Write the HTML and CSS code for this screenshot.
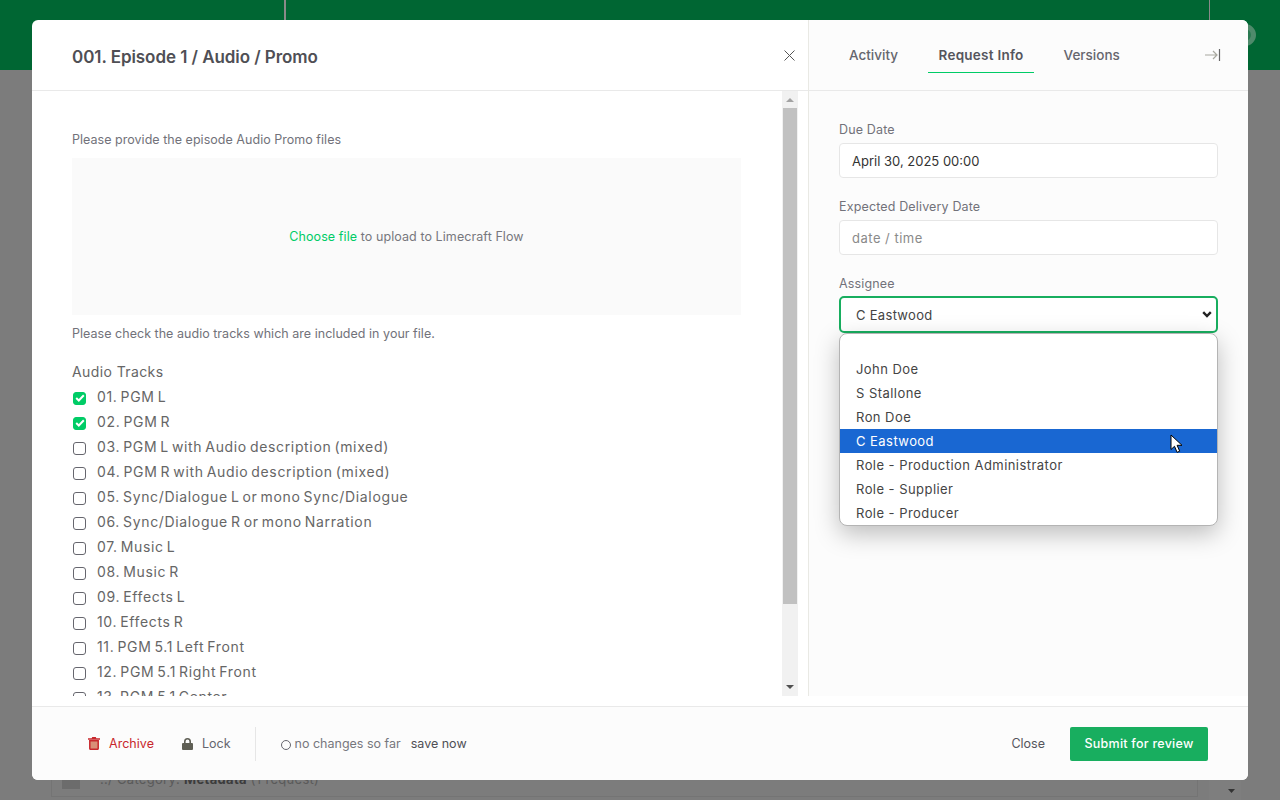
FILE: index.html
```html
<!DOCTYPE html>
<html lang="en">
<head>
<meta charset="utf-8">
<title>Request</title>
<link rel="stylesheet" href="styles.css">
</head>
<body>
<div class="backdrop">
  <header class="topbar">
    <span class="bar-divider bar-divider-left"></span>
    <span class="bar-divider bar-divider-right"></span>
    <span class="bar-avatar"></span>
  </header>
  <div class="page-behind">
    <div class="behind-row">
      <span class="behind-thumb"></span>
      <span class="behind-text">../ Category: <b>Metadata</b> (1 request)</span>
    </div>
    <div class="behind-side"></div>
    <svg class="behind-caret" width="7" height="4" viewBox="0 0 7 4"><path d="M0 0h7L3.500 4z"/></svg>
  </div>
</div>

<main class="modal">
  <div class="modal-body">
    <section class="main-pane">
      <div class="main-head">
        <h1 class="title">001. Episode 1 / Audio / Promo</h1>
        <svg class="close-icon" width="11" height="11" viewBox="0 0 11 11"><path d="M.5.5l10 10M10.500.5l-10 10"/></svg>
      </div>
      <div class="main-scroll">
        <div class="scroll-content">
          <p class="hint hint-top">Please provide the episode Audio Promo files</p>
          <div class="dropzone"><span><a class="choose">Choose file</a> to upload to Limecraft Flow</span></div>
          <p class="hint hint-check">Please check the audio tracks which are included in your file.</p>
          <h2 class="tracks-title">Audio Tracks</h2>
          <ul class="tracks">
            <li class="track"><span class="box checked"><svg width="10" height="8" viewBox="0 0 10 8"><path d="M1.200 4l2.600 2.500L8.800 1.300"/></svg></span>01. PGM L</li>
            <li class="track"><span class="box checked"><svg width="10" height="8" viewBox="0 0 10 8"><path d="M1.200 4l2.600 2.500L8.800 1.300"/></svg></span>02. PGM R</li>
            <li class="track"><span class="box"></span>03. PGM L with Audio description (mixed)</li>
            <li class="track"><span class="box"></span>04. PGM R with Audio description (mixed)</li>
            <li class="track"><span class="box"></span>05. Sync/Dialogue L or mono Sync/Dialogue</li>
            <li class="track"><span class="box"></span>06. Sync/Dialogue R or mono Narration</li>
            <li class="track"><span class="box"></span>07. Music L</li>
            <li class="track"><span class="box"></span>08. Music R</li>
            <li class="track"><span class="box"></span>09. Effects L</li>
            <li class="track"><span class="box"></span>10. Effects R</li>
            <li class="track"><span class="box"></span>11. PGM 5.1 Left Front</li>
            <li class="track"><span class="box"></span>12. PGM 5.1 Right Front</li>
            <li class="track"><span class="box"></span>13. PGM 5.1 Center</li>
          </ul>
        </div>
        <div class="scrollbar">
          <svg class="sb-arrow sb-up" width="8" height="4" viewBox="0 0 8 4"><path d="M0 4h8L4 0z"/></svg>
          <div class="sb-thumb"></div>
          <svg class="sb-arrow sb-down" width="8" height="4" viewBox="0 0 8 4"><path d="M0 0h8L4 4z"/></svg>
        </div>
      </div>
    </section>
    <aside class="side-pane">
      <div class="tabs">
        <span class="tab">Activity</span>
        <span class="tab tab-active">Request Info</span>
        <span class="tab">Versions</span>
        <svg class="collapse" width="16" height="12" viewBox="0 0 16 12"><path class="collapse-arrow" d="M0 6h12M8 2l4 4-4 4"/><path class="collapse-bar" d="M14.500 0v12"/></svg>
      </div>
      <div class="form">
        <label class="field-label">Due Date</label>
        <div class="input">April 30, 2025 00:00</div>
        <label class="field-label">Expected Delivery Date</label>
        <div class="input placeholder">date / time</div>
        <label class="field-label">Assignee</label>
        <div class="select">C Eastwood
          <svg class="chev" width="10" height="7" viewBox="0 0 10 7"><path d="M1.200 1.200L5 5l3.800-3.800"/></svg>
        </div>
      </div>
      <ul class="menu">
        <li class="opt opt-empty"></li>
        <li class="opt">John Doe</li>
        <li class="opt">S Stallone</li>
        <li class="opt">Ron Doe</li>
        <li class="opt opt-selected">C Eastwood</li>
        <li class="opt">Role - Production Administrator</li>
        <li class="opt">Role - Supplier</li>
        <li class="opt">Role - Producer</li>
      </ul>
      <svg class="cursor" width="13" height="20" viewBox="0 0 13 20"><path d="M1 1v14.500l3.500-3.200 2.600 6 2.600-1.100-2.600-5.900h4.900z"/></svg>
    </aside>
  </div>
  <footer class="footer">
    <div class="foot-left">
      <span class="foot-action foot-archive">
        <svg width="12" height="13" viewBox="0 0 12 13"><path class="trash-lid" d="M4.200 0h3.600l.5 1.200H12v1.600H0V1.200h3.700z"/><path class="trash-body" d="M1.800 3.800h8.400v7.700a.8.8 0 0 1-.8.800H2.600a.8.8 0 0 1-.8-.8z"/></svg>
        Archive
      </span>
      <span class="foot-action foot-lock">
        <svg width="11" height="12" viewBox="0 0 11 12"><path d="M2 5V3.500a3.500 3.500 0 0 1 7 0V5h1a1 1 0 0 1 1 1v5a1 1 0 0 1-1 1H1a1 1 0 0 1-1-1V6a1 1 0 0 1 1-1zm1.600 0h3.800V3.500a1.900 1.900 0 0 0-3.800 0z"/></svg>
        Lock
      </span>
      <span class="foot-sep"></span>
      <span class="status"><span class="status-dot"></span>no changes so far</span>
      <span class="save">save now</span>
    </div>
    <div class="foot-right">
      <span class="close-link">Close</span>
      <span class="submit">Submit for review</span>
    </div>
  </footer>
</main>
</body>
</html>
```
FILE: styles.css
```css
* { box-sizing: border-box; }
html, body { margin: 0; height: 100%; overflow: hidden; }
body { width: 1280px; height: 800px; position: relative; background: #7c7c7c; font-family: "Inter", "Liberation Sans", sans-serif; color: #666; font-size: 13px; }
.backdrop { height: 800px; display: flex; flex-direction: column; }
.topbar { height: 70px; background: #006633; position: relative; flex: none; }
.bar-divider { position: absolute; top: 0; width: 1px; height: 20px; background: #8a8a8a; }
.bar-divider-left { left: 284px; width: 2px; }
.bar-divider-right { left: 1209px; }
.bar-avatar { position: absolute; left: 1234px; top: 24px; width: 22px; height: 22px; border-radius: 50%; border: 5px solid #4f8a6b; background: #2b7a52; }
.page-behind { flex: 1; position: relative; }
.behind-row { position: absolute; left: 51px; width: 1147px; bottom: 3px; height: 30px; border: 1px solid #747474; display: flex; align-items: flex-end; padding: 0 0 9px 10px; gap: 20px; color: #5a5a5a; letter-spacing: .3px; }
.behind-thumb { width: 18px; height: 14px; background: #6c6c6c; margin-bottom: -2px; }
.behind-text b { color: #3c3c3c; }
.behind-side { position: absolute; left: 1209px; width: 32px; top: 0; bottom: 0; background: #7e7e7e; }
.behind-caret { position: absolute; left: 1228px; top: 719px; fill: #333; }

.modal { position: absolute; left: 32px; top: 20px; width: 1216px; height: 760px; background: #fff; border-radius: 6px; display: flex; flex-direction: column; overflow: hidden; }
.modal-body { height: 676px; display: flex; flex: none; position: relative; }
.main-pane { width: 776px; display: flex; flex-direction: column; flex: none; }
.main-head { height: 71px; padding: 0 12px 0 40px; border-bottom: 1px solid #e9e9e9; display: flex; align-items: center; justify-content: space-between; flex: none; }
.title { margin: 0; font-size: 17px; font-weight: 600; color: #4f4f55; letter-spacing: -.06px; padding-top: 3px; }
.close-icon { fill: none; stroke: #555; stroke-width: 1; margin-top: 1px; margin-right: 1px; }
.main-scroll { flex: 1; display: flex; min-height: 0; }
.scroll-content { flex: 1; padding: 0 41px 0 40px; overflow: hidden; min-width: 0; }
.hint { margin: 0; font-size: 12.500px; color: #72727a; letter-spacing: .03px; }
.hint-top { padding-top: 40px; line-height: 17px; }
.dropzone { height: 157px; margin-top: 10px; background: #fafafa; display: flex; align-items: center; justify-content: center; color: #77777d; font-size: 12.500px; letter-spacing: .08px; }
.choose { color: #00cc66; }
.hint-check { margin-top: 10px; line-height: 17px; }
.tracks-title { margin: 20px 0 0; font-size: 14px; font-weight: 400; color: #666; line-height: 20px; letter-spacing: .4px; }
.tracks { list-style: none; margin: 2px 0 0; padding: 0; }
.track { height: 25px; display: flex; align-items: center; font-size: 14px; color: #666; white-space: pre; letter-spacing: .65px; word-spacing: -1.500px; }
.box { width: 13px; height: 13px; border: 1.500px solid #66666e; border-radius: 3px; background: #fff; flex: none; display: flex; align-items: center; justify-content: center; margin: 3px 11px 0 1px; }
.box.checked { background: #00cc66; border-color: #00cc66; }
.box svg { fill: none; stroke: #fff; stroke-width: 2; }
.scrollbar { width: 16px; margin-left: 0; background: #f1f1f1; margin-right: 10px; display: flex; flex-direction: column; align-items: center; flex: none; position: relative; }
.sb-arrow { position: absolute; }
.sb-up { top: 7px; fill: #a3a3a3; }
.sb-down { bottom: 7px; fill: #505050; }
.sb-thumb { position: absolute; top: 17px; height: 496px; left: 1px; width: 14px; background: #c1c1c1; }

.side-pane { flex: 1; background: #fcfcfc; border-left: 1px solid #e9e9e4; position: relative; margin-left: 0; }
.tabs { height: 71px; border-bottom: 1px solid #e9e9e9; display: flex; padding: 0 28px 0 30px; position: relative; align-items: flex-start; gap: 0; }
.tab { font-size: 13.500px; font-weight: 500; color: #66666e; margin-right: 20px; padding: 27px 10px 0; height: 53px; line-height: 17px; white-space: nowrap; }
.tab-active { color: #55555c; border-bottom: 1px solid #00cc66; font-weight: 600; margin-right: 19.500px; padding: 27px 10.500px 0; letter-spacing: .25px; }
.collapse { position: absolute; right: 27px; top: 29px; fill: none; stroke-width: 1.200; }
.collapse-arrow { stroke: #a8a89f; }
.collapse-bar { stroke: #666; }
.form { padding: 30px 30px 0; }
.field-label { display: block; font-size: 12.500px; color: #72727a; line-height: 17px; height: 17px; margin-bottom: 5px; letter-spacing: .15px; }
.input { height: 35px; border: 1px solid #e6e6e6; border-radius: 4px; background: #fff; padding: 0 12px; display: flex; align-items: center; font-size: 13px; color: #333; margin-bottom: 20px; }
.input.placeholder { color: #8a8a8a; letter-spacing: .5px; }
.select { height: 37px; border: 2px solid #18ae5f; border-radius: 5px; background: #fff; padding: 0 15px; display: flex; align-items: center; justify-content: space-between; font-size: 13px; color: #444; margin-top: -1px; letter-spacing: .3px; }
.chev { fill: none; stroke: #222; stroke-width: 2.400; margin-right: -11px; margin-top: -1px; }
.menu { position: absolute; left: 30px; top: 313px; width: 379px; height: 193px; list-style: none; margin: 0; padding: 0; background: #fff; border-radius: 8px; border: 1px solid #b4b4b4; box-shadow: 0 8px 24px rgba(0,0,0,.25); overflow: hidden; }
.opt { height: 24px; line-height: 24px; padding: 0 16px; font-size: 13px; color: #444; white-space: nowrap; letter-spacing: .45px; }
.opt-empty { height: 23px; }
.opt-selected { background: #1967d2; color: #fff; }
.cursor { position: absolute; left: 361px; top: 414px; fill: #fff; stroke: #000; stroke-width: 1; }

.footer { flex: 1; margin-top: 10px; border-top: 1px solid #e9e9e9; background: #fcfcfc; display: flex; align-items: center; justify-content: space-between; padding: 0 40px 0 56px; }
.foot-left, .foot-right { display: flex; align-items: center; }
.foot-action { display: flex; align-items: center; gap: 9px; font-size: 12.500px; }
.foot-archive { color: #c8282d; margin-right: 27px; letter-spacing: .03px; }
.trash-lid { fill: #c8282d; }
.trash-body { fill: #d98f78; stroke: #c8282d; stroke-width: 1.500; }
.foot-lock { color: #66666e; gap: 9px; }
.foot-lock svg { fill: #5f5f55; margin-left: 1px; }
.foot-sep { width: 1px; height: 34px; background: #e6e6e6; margin: 0 25px 0 24px; }
.status { display: flex; align-items: center; gap: 4px; font-size: 12.500px; color: #77777d; margin-right: 10px; }
.status-dot { width: 10px; height: 10px; border: 1px solid #66666e; border-radius: 50%; margin-top: 2px; }
.save { font-size: 12.500px; color: #4f4f55; }
.close-link { font-size: 12.500px; color: #55555c; margin-right: 25px; }
.submit { width: 138px; height: 34px; border-radius: 2px; background: #18ae5f; color: #fff; font-size: 12.500px; font-weight: 500; letter-spacing: .25px; display: flex; align-items: center; justify-content: center; }
```
